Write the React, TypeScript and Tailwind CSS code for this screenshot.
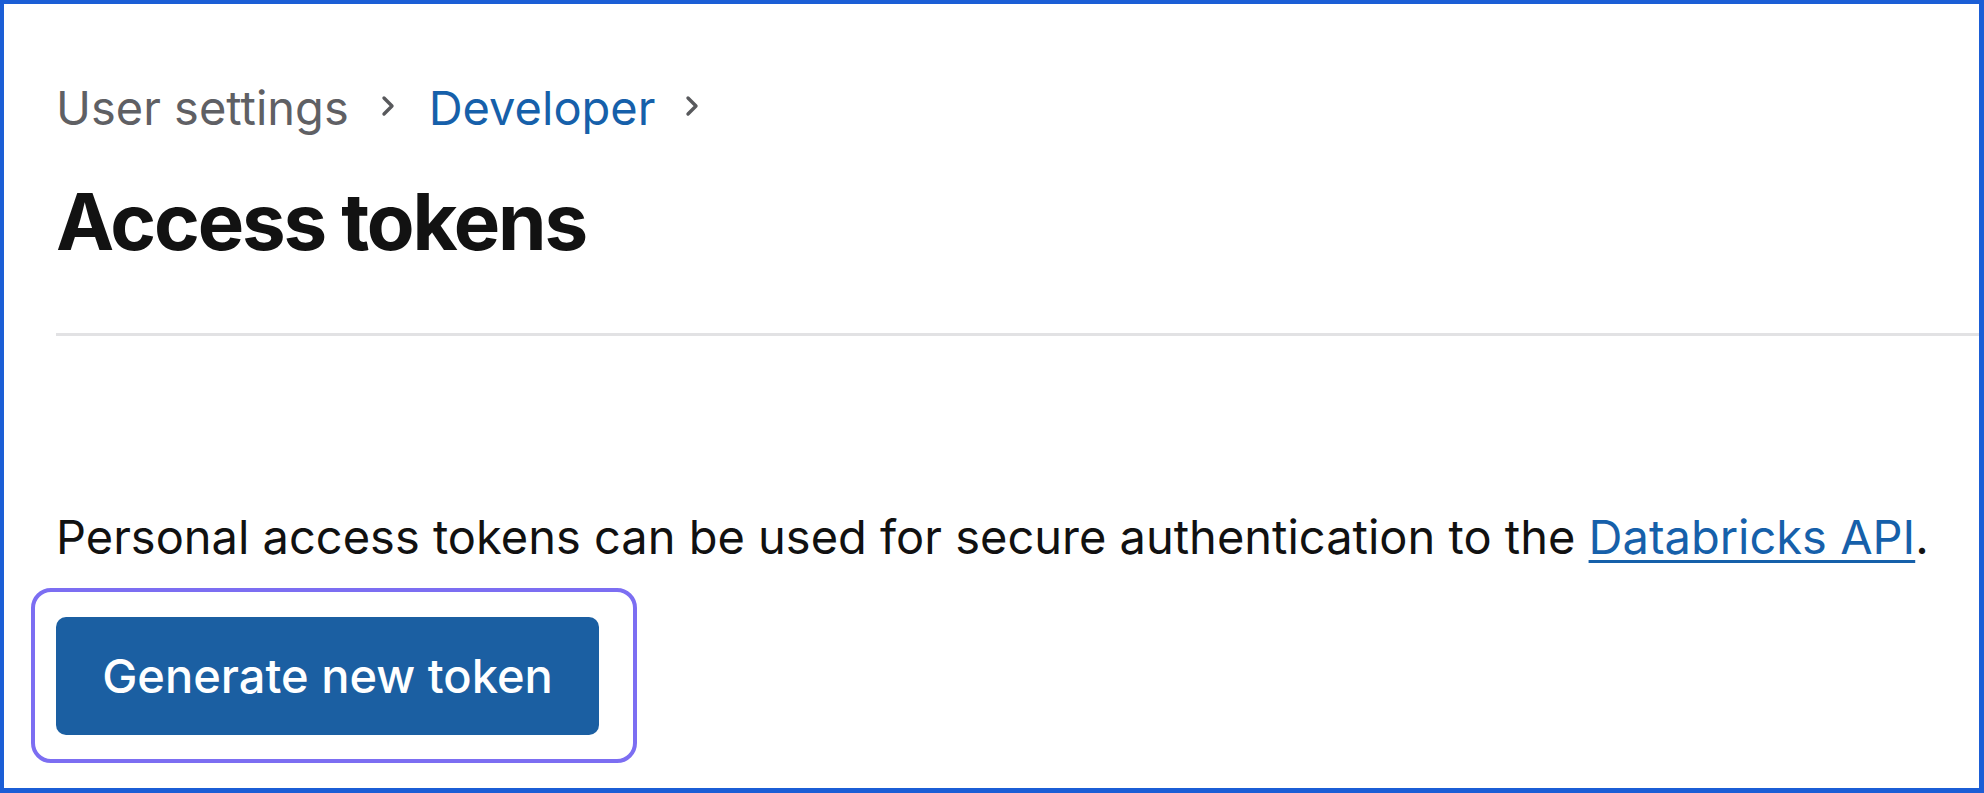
import React from "react";

function Chevron() {
  return (
    <svg width="14" height="24" viewBox="0 0 14 24" className="shrink-0" aria-hidden="true">
      <polyline points="3,4 11,12 3,20" fill="none" stroke="#58595c" strokeWidth="3.4" strokeLinecap="round" strokeLinejoin="round" />
    </svg>
  );
}

export default function App() {
  return (
    <div className="w-[1984px] h-[793px] bg-white border-t-4 border-l-4 border-r-[5px] border-b-[5px] border-[#1b5ed6] overflow-hidden [font-family:Inter,'Noto_Sans',sans-serif] text-[#111111]">
      <div className="pl-[52px] pt-[76px]">
        <nav className="flex items-center h-[56px] text-[47px] leading-[56px]">
          <span className="text-[#5f6064]">User settings</span>
          <span className="ml-[32px] mr-[34px] mt-[-4px] flex items-center"><Chevron /></span>
          <span className="text-[#1660aa]">Developer</span>
          <span className="ml-[30px] mt-[-4px] flex items-center"><Chevron /></span>
        </nav>
        <h1 className="mt-[39px] text-[78px] leading-[94px] font-bold tracking-[-0.028em] text-[#121212]">Access tokens</h1>
        <div className="mt-[64px] h-[3px] bg-[#e2e2e4]" />
        <p className="mt-[173px] text-[47px] leading-[56px] text-[#111111]">
          Personal access tokens can be used for secure authentication to the{" "}
          <a href="#" className="text-[#1660aa] underline decoration-[3px] underline-offset-[6px]">Databricks API</a>.
        </p>
        <div className="ml-[-25px] mt-[23px] inline-flex rounded-[20px] border-4 border-[#7c6ef2] pt-[25px] pl-[21px] pr-[34px] pb-[24px]">
          <button className="w-[543px] h-[118px] rounded-[10px] bg-[#1b5fa2] text-white text-[47px] font-medium flex items-center justify-center">
            Generate new token
          </button>
        </div>
      </div>
    </div>
  );
}
